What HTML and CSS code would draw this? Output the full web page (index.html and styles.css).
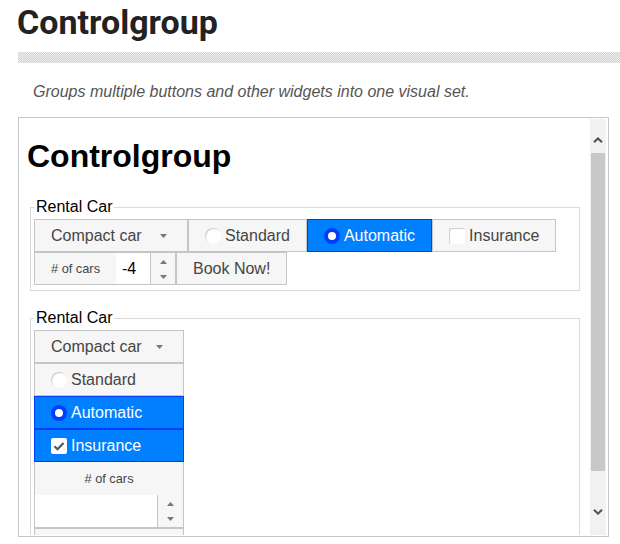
FILE: index.html
```html
<!DOCTYPE html>
<html lang="en">
<head>
<meta charset="utf-8">
<title>Controlgroup</title>
<link rel="stylesheet" href="styles.css">
</head>
<body>
<header class="page-head">
  <h1 class="page-title">Controlgroup</h1>
  <div class="stripe"></div>
  <p class="desc">Groups multiple buttons and other widgets into one visual set.</p>
</header>

<div class="frame">
  <div class="frame-content">
    <h1 class="demo-title">Controlgroup</h1>

    <fieldset class="set">
      <legend>Rental Car</legend>
      <div class="cg cg-h">
        <span class="btn select"><span class="sel-text">Compact car</span><span class="caret"><svg width="7" height="4" viewBox="0 0 7 4"><path d="M0 0H7L3.5 4Z" fill="#777"/></svg></span></span>
        <span class="btn"><span class="ico radio"></span>Standard</span>
        <span class="btn active"><span class="ico radio"></span>Automatic</span>
        <span class="btn"><span class="ico check"></span>Insurance</span>
        <span class="cg-label h-label">#&nbsp;of cars</span>
        <span class="spinner h-spinner">
          <span class="spin-input">-4</span>
          <span class="spin-btns">
            <span class="spin-up"><svg width="7" height="4" viewBox="0 0 7 4"><path d="M0 4H7L3.5 0Z" fill="#777"/></svg></span>
            <span class="spin-down"><svg width="7" height="4" viewBox="0 0 7 4"><path d="M0 0H7L3.5 4Z" fill="#777"/></svg></span>
          </span>
        </span>
        <span class="btn">Book Now!</span>
      </div>
    </fieldset>

    <fieldset class="set set-2">
      <legend>Rental Car</legend>
      <div class="cg cg-v">
        <span class="btn select"><span class="sel-text">Compact car</span><span class="caret"><svg width="7" height="4" viewBox="0 0 7 4"><path d="M0 0H7L3.5 4Z" fill="#777"/></svg></span></span>
        <span class="btn"><span class="ico radio"></span>Standard</span>
        <span class="btn active"><span class="ico radio"></span>Automatic</span>
        <span class="btn active"><span class="ico check checked"><svg width="16" height="16" viewBox="0 0 16 16"><path d="M3.5 8.2L6.5 11.2L12.5 5" fill="none" stroke="#555" stroke-width="2.2"/></svg></span>Insurance</span>
        <span class="cg-label v-label">#&nbsp;of cars</span>
        <span class="spinner v-spinner">
          <span class="spin-input"></span>
          <span class="spin-btns">
            <span class="spin-up"><svg width="7" height="4" viewBox="0 0 7 4"><path d="M0 4H7L3.5 0Z" fill="#777"/></svg></span>
            <span class="spin-down"><svg width="7" height="4" viewBox="0 0 7 4"><path d="M0 0H7L3.5 4Z" fill="#777"/></svg></span>
          </span>
        </span>
        <span class="btn">Book Now!</span>
      </div>
    </fieldset>
  </div>

  <div class="scrollbar">
    <div class="sb-up"><svg width="10" height="6" viewBox="0 0 10 6"><polyline points="1,5.2 5,1.4 9,5.2" fill="none" stroke="#505050" stroke-width="2"/></svg></div>
    <div class="sb-thumb"></div>
    <div class="sb-gap"></div>
    <div class="sb-down"><svg width="10" height="6" viewBox="0 0 10 6"><polyline points="1,0.8 5,4.6 9,0.8" fill="none" stroke="#505050" stroke-width="2"/></svg></div>
  </div>
</div>
</body>
</html>
```

FILE: styles.css
```css
* {
  box-sizing: border-box;
}

html, body {
  margin: 0;
  background: #fff;
}

body {
  padding: 0 0 0 18px;
  font-family: "Liberation Sans", Arial, sans-serif;
  overflow: hidden;
}

/* page header */
.page-title {
  margin: 2px 0 0 -1px;
  font: 700 34px/40px Roboto, "Liberation Sans", sans-serif;
  color: #222;
}

.stripe {
  margin-top: 10px;
  height: 11px;
  background: repeating-conic-gradient(#d3d3d3 0 25%, #ededed 0 50%) 0 0 / 2px 2px;
}

.desc {
  margin: 20px 0 0 15px;
  font: italic 16px/18px "Liberation Sans", Arial, sans-serif;
  color: #555;
}

/* demo frame */
.frame {
  margin-top: 16px;
  width: 591px;
  height: 420px;
  border: 1px solid #c6c6c6;
  padding: 1px 2px 1px 0;
  display: flex;
}

.frame-content {
  flex: 1;
  min-width: 0;
  overflow: hidden;
  padding: 19px 0 0 8px;
}

.demo-title {
  margin: 0 0 23px;
  font: 700 32px/37px "Liberation Sans", Arial, sans-serif;
  color: #000;
}

.set {
  margin: 0 0 0 3px;
  width: 550px;
  min-width: 0;
  border: 1px solid #dadada;
  padding: 3px 3px 5px;
}

.set-2 {
  margin-top: 18px;
}

.set legend {
  padding: 0 2px;
  font-size: 16px;
  line-height: 18px;
  color: #000;
}

/* control groups */
.cg-h {
  display: flex;
  flex-wrap: wrap;
}

.cg-v {
  display: flex;
  flex-direction: column;
  width: 150px;
}

.btn {
  height: 33px;
  display: inline-flex;
  align-items: center;
  padding: 0 16px;
  border: 1px solid #c5c5c5;
  background: #f6f6f6;
  color: #454545;
  font-size: 16px;
  line-height: 18px;
  white-space: nowrap;
}

.btn.active {
  background: #007fff;
  border-color: #003eff;
  color: #fff;
}

.select {
  width: 154px;
  justify-content: space-between;
}

.cg-v .btn {
  width: 150px;
}

.caret {
  width: 16px;
  height: 16px;
  display: flex;
  align-items: center;
  justify-content: center;
}

.ico {
  width: 16px;
  height: 16px;
  flex: none;
  margin-right: 4px;
  background: #fff;
  box-shadow: inset 1px 1px 1px #ccc;
}

.radio {
  border-radius: 50%;
}

.active .radio {
  border: 4px solid #003eff;
  box-shadow: none;
}

.check {
  border-radius: 2px;
}

.check.checked {
  box-shadow: none;
}

.check svg {
  display: block;
}

/* label */
.cg-label {
  height: 33px;
  display: flex;
  align-items: center;
  justify-content: center;
  background: #f6f6f6;
  color: #454545;
  font-size: 12.8px;
  line-height: 15px;
  white-space: nowrap;
}

.h-label {
  width: 82px;
  border: 1px solid #c5c5c5;
  border-right: none;
}

.v-label {
  width: 150px;
  border-left: 1px solid #c5c5c5;
  border-right: 1px solid #c5c5c5;
}

/* spinner */
.spinner {
  height: 33px;
  display: flex;
  background: #fff;
  border: 1px solid #c5c5c5;
}

.h-spinner {
  width: 60px;
  border-left: none;
}

.v-spinner {
  width: 150px;
  border-top: none;
}

.spin-input {
  flex: 1;
  display: flex;
  align-items: center;
  padding-left: 6px;
  font-size: 16px;
  color: #000;
}

.spin-btns {
  width: 25px;
  display: flex;
  flex-direction: column;
  border-left: 1px solid #c5c5c5;
  background: #f6f6f6;
}

.v-spinner .spin-btns {
  width: 26px;
}

.spin-up,
.spin-down {
  flex: 1;
  display: flex;
  justify-content: center;
}

.spin-up {
  align-items: center;
  padding-top: 1px;
}

.spin-down {
  align-items: center;
  padding-bottom: 0;
}

.spin-up svg,
.spin-down svg {
  display: block;
}

/* scrollbar */
.scrollbar {
  width: 16px;
  flex: none;
  display: flex;
  flex-direction: column;
  background: #f1f1f1;
}

.sb-up,
.sb-down {
  height: 34px;
  display: flex;
  justify-content: center;
}

.sb-up {
  padding-top: 18px;
}

.sb-down {
  padding-top: 8px;
}

.sb-up svg,
.sb-down svg {
  display: block;
}

.sb-thumb {
  height: 318px;
  margin: 0 1px;
  background: #c8c8c8;
}

.sb-gap {
  flex: 1;
}
```
